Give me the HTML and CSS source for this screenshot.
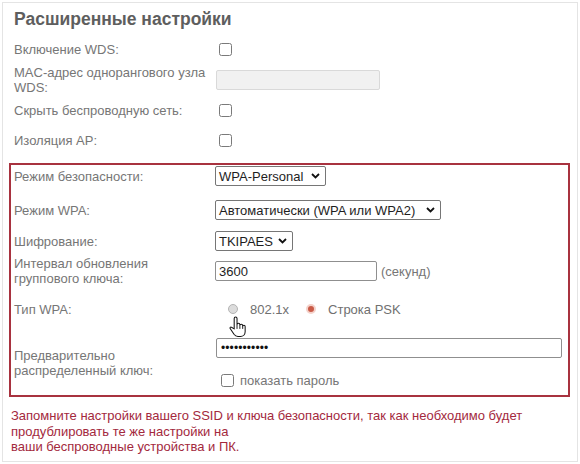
FILE: index.html
```html
<!DOCTYPE html>
<html lang="ru">
<head>
<meta charset="utf-8">
<link rel="stylesheet" href="styles.css">
</head>
<body>
<div class="frame">
  <h1 class="title">Расширенные настройки</h1>
  <div class="section">
    <div class="row h22">
      <div class="label">Включение WDS:</div>
      <div class="ctrl"><span class="cb"></span></div>
    </div>
    <div class="row h40">
      <div class="label two">MAC-адрес однорангового узла<br>WDS:</div>
      <div class="ctrl"><span class="mac"></span></div>
    </div>
    <div class="row h20">
      <div class="label">Скрыть беспроводную сеть:</div>
      <div class="ctrl"><span class="cb"></span></div>
    </div>
    <div class="row h40">
      <div class="label">Изоляция AP:</div>
      <div class="ctrl"><span class="cb"></span></div>
    </div>
  </div>
  <div class="secbox">
    <div class="row h22">
      <div class="label">Режим безопасности:</div>
      <div class="ctrl"><span class="select w111">WPA-Personal<svg class="chev" viewBox="0 0 9 6" width="9" height="6"><polyline points="1,1 4.5,4.5 8,1" fill="none" stroke="#111" stroke-width="1.8"/></svg></span></div>
    </div>
    <div class="row h22 mt12">
      <div class="label">Режим WPA:</div>
      <div class="ctrl"><span class="select w226">Автоматически (WPA или WPA2)<svg class="chev" viewBox="0 0 9 6" width="9" height="6"><polyline points="1,1 4.5,4.5 8,1" fill="none" stroke="#111" stroke-width="1.8"/></svg></span></div>
    </div>
    <div class="row h22 mt9">
      <div class="label">Шифрование:</div>
      <div class="ctrl"><span class="select w78">TKIPAES<svg class="chev" viewBox="0 0 9 6" width="9" height="6"><polyline points="1,1 4.5,4.5 8,1" fill="none" stroke="#111" stroke-width="1.8"/></svg></span></div>
    </div>
    <div class="row h32 mt3">
      <div class="label two">Интервал обновления<br>группового ключа:</div>
      <div class="ctrl"><span class="input w162">3600</span><span class="unit">(секунд)</span></div>
    </div>
    <div class="row h22 mt11 typerow">
      <div class="label">Тип WPA:</div>
      <div class="ctrl">
        <span class="radio off"></span><span class="rtext">802.1x</span>
        <span class="radio on"></span><span class="rtext">Строка PSK</span>
      </div>
      <svg class="hand" viewBox="0 0 18 22" width="17" height="22">
        <path d="M5.5 13 V2 a1.5 1.5 0 0 1 3 0 V8.5 a1.5 1.5 0 0 1 3 0 V9.5 a1.5 1.5 0 0 1 3 0 V10.5 a1.3 1.3 0 0 1 2.6 0 V16 c0 3-2.2 5-5 5 H9.5 c-2 0-3.2-.9-4.2-2.3 L1.2 12.6 c-.6-.9.5-2 1.4-1.4 L5.5 13 Z" fill="#fff" stroke="#111" stroke-width="1.1" stroke-linejoin="round"/>
        <path d="M8.5 9 V13 M11.5 10 V13 M14.5 11 V13" fill="none" stroke="#111" stroke-width="1"/>
      </svg>
    </div>
    <div class="row keyrow">
      <div class="label two">Предварительно<br>распределенный ключ:</div>
      <div class="ctrl col">
        <span class="input pw">•••••••••••</span>
        <span class="showpw"><span class="cb small"></span>показать пароль</span>
      </div>
    </div>
  </div>
  <p class="note">Запомните настройки вашего SSID и ключа безопасности, так как необходимо будет<br>продублировать те же настройки на<br>ваши беспроводные устройства и ПК.</p>
</div>
</body>
</html>
```
FILE: styles.css
```css
* { box-sizing: border-box; }
html, body { margin: 0; padding: 0; background: #fff; }
body {
  font-family: "Liberation Sans", Arial, sans-serif;
  font-size: 13px;
  color: #767676;
}
.frame {
  margin: 2px;
  height: 460px;
  border: 1px solid #e4e4e4;
  padding: 5px 7px 0 6px;
}
.title {
  margin: 0 0 8px 5px;
  height: 22px;
  line-height: 22px;
  font-size: 17.5px;
  font-weight: bold;
  color: #5e5e5e;
}
.row {
  display: flex;
  align-items: center;
}
.h20 { height: 20px; }
.h22 { height: 22px; }
.h32 { height: 32px; }
.h40 { height: 40px; }
.mt3 { margin-top: 3px; }
.mt9 { margin-top: 9px; }
.mt11 { margin-top: 11px; }
.mt12 { margin-top: 12px; }
.label {
  flex: 0 0 206px;
  padding-left: 5px;
  line-height: 15px;
}
.label.two { line-height: 15px; }
.ctrl {
  display: flex;
  align-items: center;
  flex: 1;
}
.ctrl.col {
  flex-direction: column;
  align-items: flex-start;
}
.cb {
  display: inline-block;
  width: 13px;
  height: 13px;
  margin-left: 4px;
  border: 1px solid #7a7a7a;
  border-radius: 2.5px;
  background: #fff;
}
.mac {
  display: block;
  width: 164px;
  height: 20px;
  margin-left: 1px;
  background: #f1f1f1;
  border: 1px solid #d9d9d9;
  border-radius: 2px;
}
.section { margin-bottom: 3px; }
.secbox {
  border: 2px solid #a8323f;
  padding: 0 0 7px 0;
}
.secbox .label {
  flex-basis: 204px;
  padding-left: 3px;
}
.select {
  display: inline-flex;
  align-items: center;
  justify-content: space-between;
  height: 20px;
  padding: 0 5px 0 3px;
  border: 1px solid #767676;
  border-radius: 2px;
  color: #1e1e1e;
  background: #fff;
  white-space: nowrap;
}
.w111 { width: 111px; }
.w226 { width: 226px; }
.w78 { width: 78px; }
.w162 { width: 162px; }
.chev { flex: none; margin-left: 4px; }
.input {
  display: inline-flex;
  align-items: center;
  height: 20px;
  padding: 0 3px;
  border: 1px solid #8f8f8f;
  border-radius: 2px;
  color: #1e1e1e;
  background: #fff;
}
.unit { margin-left: 4px; color: #767676; }
.typerow { position: relative; }
.radio {
  display: inline-block;
  width: 10px;
  height: 10px;
  border-radius: 50%;
  margin-left: 13px;
}
.radio.off {
  background: #dcdcdc;
  border: 1px solid #b4b4b4;
}
.radio.on {
  margin-left: 17px;
  background: #c95a47;
  border: 2.5px solid #f4d2cb;
}
.rtext { margin-left: 12px; color: #707070; }
.hand {
  position: absolute;
  left: 218px;
  top: 18px;
}
.keyrow { margin-top: 18px; height: 50px; }
.pw {
  width: 346px;
  margin-left: 1px;
  padding-left: 4px;
  font-size: 12px;
  letter-spacing: 0.1px;
  color: #111;
}
.showpw {
  display: flex;
  align-items: center;
  height: 16px;
  margin-top: 14px;
}
.cb.small { margin-left: 6px; margin-right: 6px; }
.note {
  margin: 11px 0 0 2px;
  line-height: 15.5px;
  color: #a3293d;
}
```
